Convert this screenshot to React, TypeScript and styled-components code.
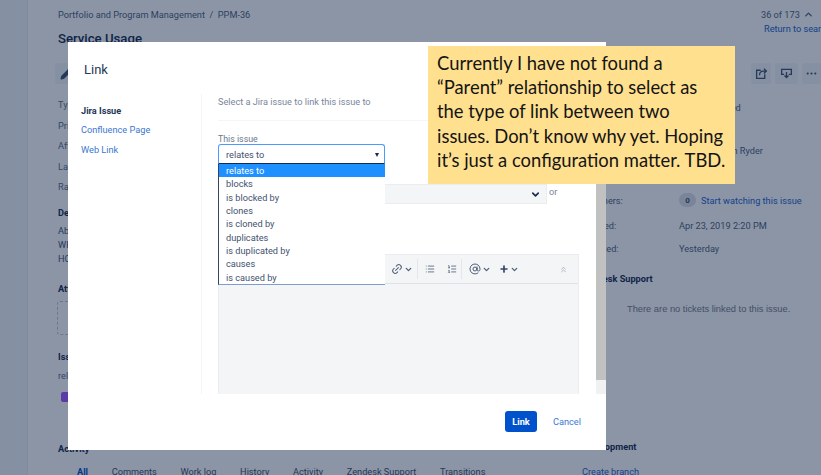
import React from "react";
import styled, { createGlobalStyle } from "styled-components";
import { AtSign, ChevronDown, ChevronsUp, ChevronUp, Link2, List, ListOrdered, MoreHorizontal, Pencil, Plus } from "lucide-react";

const GlobalStyle = createGlobalStyle`
    html, body {
        margin: 0;
        padding: 0;
        height: 100%;
        overflow: hidden;
        background: #fff;
    }
    * {
        box-sizing: border-box;
    }
    body {
        font-family: Roboto, "Noto Sans", sans-serif;
        font-size: 9.2px;
        color: #172b4d;
    }
`;

const Page = styled.div`
    position: relative;
    width: 821px;
    height: 475px;
    overflow: hidden;
    display: grid;
    grid-template-columns: 28px 1fr;
`;

const SideStrip = styled.div`
    background: #f4f5f7;
    border-right: 1px solid #ebecf0;
`;

const IssueArea = styled.div`
    padding: 8px 0 0 30px;
    width: 793px;
    overflow: hidden;
`;

const TopRow = styled.div`
    display: flex;
    justify-content: space-between;
    height: 55px;
`;

const Crumbs = styled.div`
    color: #505f79;
    line-height: 14px;
`;

const IssueTitle = styled.h1`
    margin: 8px 0 0;
    font-size: 13.2px;
    font-weight: 500;
    line-height: 18px;
    color: #172b4d;
`;

const Pager = styled.div`
    width: 60px;
    flex: none;
    color: #505f79;
    line-height: 14px;
    white-space: nowrap;
    svg {
        width: 11px;
        height: 11px;
        margin-left: 3px;
        vertical-align: -2px;
        stroke-width: 3;
    }
`;

const ReturnLink = styled.div`
    color: #1d62c9;
    margin-left: 3px;
`;

const Columns = styled.div`
    display: grid;
    grid-template-columns: 524px 1fr;
`;

const ToolBtn = styled.div`
    width: ${(p: { $w?: number }) => p.$w ?? 23}px;
    height: 21px;
    border-radius: 3px;
    background: #f4f5f7;
    display: flex;
    align-items: center;
    justify-content: center;
    color: #42526e;
    svg {
        width: 13px;
        height: 13px;
    }
`;

const Toolbar = styled.div`
    display: flex;
    gap: 4px;
    height: 21px;
    margin-left: ${(p: { $left?: number }) => p.$left ?? 0}px;
`;

const FieldList = styled.div`
    margin-top: 14px;
    display: grid;
    row-gap: 6.5px;
    line-height: 14px;
    color: #5e6c84;
`;

const Heading = styled.div`
    font-size: 9.2px;
    font-weight: 700;
    color: #172b4d;
    line-height: 14px;
    margin-top: ${(p: { $top: number }) => p.$top}px;
`;

const BodyLines = styled.div`
    margin-top: 4px;
    line-height: 14px;
    color: #42526e;
`;

const DropZone = styled.div`
    margin-top: 5px;
    height: 34px;
    width: 300px;
    margin-left: -1px;
    border: 1px dashed #c1c7d0;
    border-radius: 3px;
`;

const LinkGroup = styled.div`
    margin-top: 5px;
    color: #5e6c84;
    line-height: 14px;
`;

const StoryMark = styled.div`
    margin: 9px 0 0 3px;
    width: 10px;
    height: 10px;
    border-radius: 2px;
    background: #a257ff;
`;

const Tabs = styled.div`
    display: flex;
    gap: 23.7px;
    margin: 9px 0 0 19px;
    line-height: 14px;
    white-space: nowrap;
`;

const Tab = styled.span`
    font-weight: ${(p: { $on?: boolean }) => (p.$on ? 700 : 400)};
    color: ${(p: { $on?: boolean }) => (p.$on ? "#0052cc" : "#42526e")};
`;

const RightCol = styled.div`
    width: 240px;
`;

const DetailRow = styled.div`
    display: grid;
    grid-template-columns: 97px 1fr;
    align-items: center;
    height: 14px;
    margin-top: ${(p: { $top: number }) => p.$top}px;
    color: #505f79;
    white-space: nowrap;
`;

const Person = styled.span`
    display: flex;
    align-items: center;
    gap: 5px;
`;

const Avatar = styled.span`
    width: 15px;
    height: 15px;
    border-radius: 50%;
    background: #6b778c;
`;

const Watch = styled.span`
    display: flex;
    align-items: center;
    gap: 5px;
    color: #1d62c9;
`;

const WatchCount = styled.span`
    width: 17px;
    height: 14px;
    border-radius: 8px;
    background: #dfe1e6;
    color: #42526e;
    font-size: 8px;
    font-weight: 700;
    display: flex;
    align-items: center;
    justify-content: center;
`;

const EmptyNote = styled.div`
    margin: 16px 0 0 45px;
    font-family: "Liberation Sans", Arial, sans-serif;
    font-size: 9.3px;
    line-height: 14px;
    color: #777c86;
    white-space: nowrap;
`;

const BranchLink = styled.div`
    margin-top: 11px;
    color: #1d62c9;
    line-height: 14px;
`;

const Blanket = styled.div`
    position: absolute;
    inset: 0;
    background: rgba(9, 30, 66, 0.47);
`;

const Modal = styled.div`
    position: absolute;
    left: 68px;
    top: 42px;
    width: 538px;
    height: 408px;
    background: #fff;
    display: flex;
    flex-direction: column;
`;

const ModalHeader = styled.div`
    height: 52px;
    padding: 19px 0 0 16px;
    font-size: 13px;
    line-height: 18px;
    color: #253858;
`;

const ModalBody = styled.div`
    height: 300px;
    display: grid;
    grid-template-columns: 134px 394px 10px;
`;

const ModalNav = styled.div`
    border-right: 1px solid #f4f5f7;
    padding: 10px 0 0 13px;
    display: grid;
    align-content: start;
    row-gap: 5.3px;
    line-height: 14px;
`;

const NavItem = styled.div`
    font-weight: ${(p: { $on?: boolean }) => (p.$on ? 700 : 400)};
    color: ${(p: { $on?: boolean }) => (p.$on ? "#253858" : "#3b78d0")};
`;

const FormArea = styled.div`
    padding: 0 0 0 16px;
    overflow: hidden;
`;

const Intro = styled.div`
    line-height: 14px;
    color: #7a869a;
    padding: 1px 0 11px;
    border-bottom: 1px solid #f4f5f7;
    height: 27px;
`;

const FieldLabel = styled.div`
    margin-top: 13px;
    font-size: 8.8px;
    line-height: 10px;
    color: #6b778c;
`;

const SelectWrap = styled.div`
    position: relative;
    width: 167px;
    height: 20px;
`;

const SelectBox = styled.div`
    height: 20px;
    padding: 1px 0 0 7px;
    border: 1px solid #4c9aff;
    border-bottom-color: #172b4d;
    border-radius: 3px 3px 0 0;
    line-height: 18px;
    color: #42526e;
    display: flex;
    align-items: center;
    justify-content: space-between;
`;

const Caret = styled.span`
    width: 0;
    height: 0;
    margin-right: 5px;
    border-left: 2.5px solid transparent;
    border-right: 2.5px solid transparent;
    border-top: 4px solid #172b4d;
`;

const OptionList = styled.ul`
    position: absolute;
    left: 0;
    top: 20px;
    width: 167px;
    margin: 0;
    padding: 0;
    list-style: none;
    background: #fff;
    border-left: 1px solid #344563;
    border-bottom: 1px solid #7f9ccb;
    z-index: 2;
`;

const Option = styled.li`
    height: 13.33px;
    line-height: 13.33px;
    padding-left: 7px;
    background: ${(p: { $on?: boolean }) => (p.$on ? "#1e90ff" : "#fff")};
    color: ${(p: { $on?: boolean }) => (p.$on ? "#fff" : "#42526e")};
`;

const IssueRow = styled.div`
    margin-top: 20px;
    display: flex;
    gap: 2px;
    align-items: flex-start;
`;

const IssuePicker = styled.div`
    width: 329px;
    height: 20px;
    background: #f4f5f7;
    border: 1px solid #ebecf0;
    display: flex;
    align-items: center;
    justify-content: flex-end;
    padding-right: 5px;
    svg {
        width: 11px;
        height: 11px;
        color: #172b4d;
    }
`;

const OrText = styled.span`
    color: #7a869a;
    line-height: 14px;
    margin-top: 1px;
`;

const Editor = styled.div`
    margin-top: 50px;
    width: 361px;
    height: 160px;
    background: #f4f5f7;
    border: 1px solid #ebecf0;
    border-bottom: 0;
`;

const EditorBar = styled.div`
    height: 29px;
    border-bottom: 1px solid #dfe1e6;
    display: flex;
    align-items: center;
    color: #505f79;
    padding-left: 165px;
`;

const EditorGroup = styled.div<{ $gap?: number; $icon?: number; $line?: boolean }>`
    display: flex;
    align-items: center;
    gap: ${(p) => p.$gap ?? 1}px;
    height: 20px;
    padding: 0 ${(p) => (p.$line ? 4 : 1)}px 0 7px;
    border-right: ${(p) => (p.$line ? "1px solid #e4e6ea" : "0")};
    svg {
        width: ${(p) => p.$icon ?? 12}px;
        height: ${(p) => p.$icon ?? 12}px;
    }
`;

const SmallChevron = styled(ChevronDown)`
    && {
        width: 9px;
        height: 9px;
        stroke-width: 3.5;
    }
`;

const ChainIcon = styled(Link2)`
    transform: rotate(-45deg);
`;

const PlusIcon = styled(Plus)`
    color: #344563;
`;

const Collapse = styled(ChevronsUp)`
    margin-left: auto;
    margin-right: 10px;
    width: 9px;
    height: 9px;
    color: #97a0af;
`;

const ScrollTrack = styled.div`
    background: #f1f1f1;
`;

const ScrollThumb = styled.div`
    height: 286px;
    background: #c1c1c1;
`;

const ModalFooter = styled.div`
    flex: 1;
    display: flex;
    align-items: flex-start;
    justify-content: flex-end;
    gap: 16px;
    padding: 17px 26px 0 0;
`;

const PrimaryBtn = styled.button`
    width: 32px;
    height: 21px;
    padding: 0;
    border: 0;
    border-radius: 3px;
    background: #0052cc;
    color: #fff;
    font: 700 9.2px Roboto, sans-serif;
`;

const CancelLink = styled.a`
    width: 27px;
    line-height: 21px;
    color: #3b78d0;
`;

const StickyNote = styled.div`
    position: absolute;
    left: 428px;
    top: 46px;
    width: 307px;
    height: 138px;
    padding: 5px 0 0 9px;
    background: #ffe08f;
    font-family: Lato, "Noto Sans", sans-serif;
    font-size: 18.4px;
    line-height: 24.2px;
    color: #141414;
    white-space: nowrap;
`;

const OPTIONS = ["relates to", "blocks", "is blocked by", "clones", "is cloned by", "duplicates", "is duplicated by", "causes", "is caused by"];
const TABS = ["All", "Comments", "Work log", "History", "Activity", "Zendesk Support", "Transitions"];

const ShareIcon = () => (
    <svg viewBox="0 0 16 16" fill="none" stroke="currentColor" strokeWidth="1.6">
        <path d="M7 4H2v10h10V9" />
        <path d="M5.5 10c0-3 2-5 5-5H14M11 2l3 3-3 3" />
    </svg>
);

const ExportIcon = () => (
    <svg viewBox="0 0 16 16" fill="none" stroke="currentColor" strokeWidth="1.6">
        <path d="M5 9H2V3h12v6h-3" />
        <path d="M8 6v7M5.5 10.5 8 13l2.5-2.5" />
    </svg>
);

const App: React.FC = () => {
    return (
        <>
            <GlobalStyle />
            <Page>
                <SideStrip />
                <IssueArea>
                    <TopRow>
                        <div>
                            <Crumbs>Portfolio and Program Management &nbsp;/&nbsp; PPM-36</Crumbs>
                            <IssueTitle>Service Usage</IssueTitle>
                        </div>
                        <Pager>
                            36 of 173<ChevronUp />
                            <ReturnLink>Return to search</ReturnLink>
                        </Pager>
                    </TopRow>
                    <Columns>
                        <div>
                            <Toolbar $left={-3}>
                                <ToolBtn><Pencil fill="currentColor" /></ToolBtn>
                            </Toolbar>
                            <FieldList>
                                <div>Type:</div>
                                <div>Priority:</div>
                                <div>Affects Version/s:</div>
                                <div>Labels:</div>
                                <div>Rank:</div>
                            </FieldList>
                            <Heading $top={12}>Description</Heading>
                            <BodyLines>
                                <div>About</div>
                                <div>WHAT</div>
                                <div>HOW</div>
                            </BodyLines>
                            <Heading $top={16}>Attachments</Heading>
                            <DropZone />
                            <Heading $top={15}>Issue Links</Heading>
                            <LinkGroup>relates to</LinkGroup>
                            <StoryMark />
                            <Heading $top={40}>Activity</Heading>
                            <Tabs>
                                {TABS.map((t, i) => (
                                    <Tab key={t} $on={i === 0}>{t}</Tab>
                                ))}
                            </Tabs>
                        </div>
                        <RightCol>
                            <Toolbar $left={169}>
                                <ToolBtn><ShareIcon /></ToolBtn>
                                <ToolBtn $w={25}><ExportIcon /></ToolBtn>
                                <ToolBtn><MoreHorizontal /></ToolBtn>
                            </Toolbar>
                            <DetailRow $top={16}><span>Resolution:</span><span>Not Completed</span></DetailRow>
                            <DetailRow $top={29}><span>Assignee:</span><Person><Avatar />Jonathan Ryder</Person></DetailRow>
                            <DetailRow $top={36}>
                                <span>Watchers:</span>
                                <Watch><WatchCount>0</WatchCount>Start watching this issue</Watch>
                            </DetailRow>
                            <DetailRow $top={11}><span>Created:</span><span>Apr 23, 2019 2:20 PM</span></DetailRow>
                            <DetailRow $top={9}><span>Updated:</span><span>Yesterday</span></DetailRow>
                            <Heading $top={17}>Zendesk Support</Heading>
                            <EmptyNote>There are no tickets linked to this issue.</EmptyNote>
                            <Heading $top={124}>Development</Heading>
                            <BranchLink>Create branch</BranchLink>
                        </RightCol>
                    </Columns>
                </IssueArea>
                <Blanket />
                <Modal>
                    <ModalHeader>Link</ModalHeader>
                    <ModalBody>
                        <ModalNav>
                            <NavItem $on>Jira Issue</NavItem>
                            <NavItem>Confluence Page</NavItem>
                            <NavItem>Web Link</NavItem>
                        </ModalNav>
                        <FormArea>
                            <Intro>Select a Jira issue to link this issue to</Intro>
                            <FieldLabel>This issue</FieldLabel>
                            <SelectWrap>
                                <SelectBox>relates to<Caret /></SelectBox>
                                <OptionList>
                                    {OPTIONS.map((o, i) => (
                                        <Option key={o} $on={i === 0}>{o}</Option>
                                    ))}
                                </OptionList>
                            </SelectWrap>
                            <IssueRow>
                                <IssuePicker><ChevronDown strokeWidth={3.5} /></IssuePicker>
                                <OrText>or</OrText>
                            </IssueRow>
                            <Editor>
                                <EditorBar>
                                    <EditorGroup $line><ChainIcon /><SmallChevron /></EditorGroup>
                                    <EditorGroup $gap={12} $icon={10} $line><List /><ListOrdered /></EditorGroup>
                                    <EditorGroup><AtSign /><SmallChevron /></EditorGroup>
                                    <EditorGroup $icon={10}><PlusIcon strokeWidth={4} /><SmallChevron /></EditorGroup>
                                    <Collapse />
                                </EditorBar>
                            </Editor>
                        </FormArea>
                        <ScrollTrack><ScrollThumb /></ScrollTrack>
                    </ModalBody>
                    <ModalFooter>
                        <PrimaryBtn>Link</PrimaryBtn>
                        <CancelLink>Cancel</CancelLink>
                    </ModalFooter>
                </Modal>
                <StickyNote>
                    Currently I have not found a<br />
                    “Parent” relationship to select as<br />
                    the type of link between two<br />
                    issues. Don’t know why yet. Hoping<br />
                    it’s just a configuration matter. TBD.
                </StickyNote>
            </Page>
        </>
    );
};

export default App;
